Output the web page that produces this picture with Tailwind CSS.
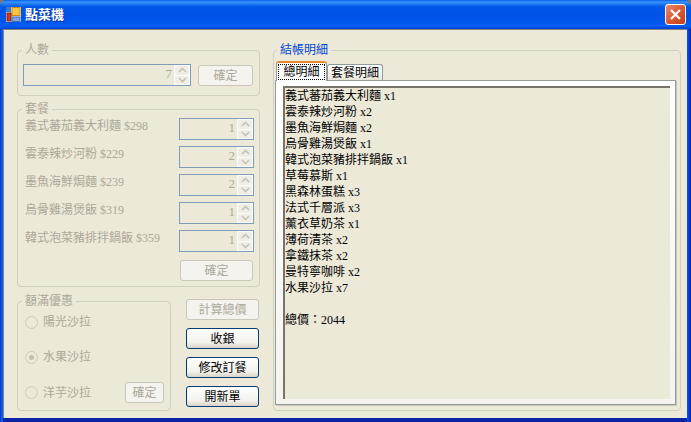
<!DOCTYPE html>
<html lang="zh-Hant">
<head>
<meta charset="utf-8">
<script src="https://cdn.jsdelivr.net/npm/@tailwindcss/browser@4"></script>
<title>點菜機</title>
</head>
<body class="bg-[#7a7a70]">
<div class="w-[691px] h-[422px] overflow-hidden flex flex-col rounded-t-[7px] font-['Liberation_Serif','Noto_Sans_CJK_TC',serif] text-[12px] leading-[16px] text-black bg-[#0a3fd8]">
  <!-- title bar -->
  <div class="h-[29px] shrink-0 flex items-center pl-[6px] pr-[5px] bg-[linear-gradient(180deg,#0a5fe8_0px,#3a93ff_2px,#1f7bf5_4px,#0058ea_7px,#0053e6_14px,#0058ee_24px,#0060f6_26px,#0048e0_28px,#0040d8_29px)]">
    <svg width="15" height="15" viewBox="0 0 15 15" class="shrink-0">
      <rect x="0" y="0" width="15" height="15" fill="#f2f4f8"/>
      <rect x="0" y="0" width="5" height="5" fill="#3d78d0"/>
      <rect x="6" y="0.5" width="8" height="8" fill="#f7c63a" stroke="#c88a10" stroke-width="1"/>
      <rect x="1" y="6" width="4" height="8" fill="#d9361e" stroke="#7a1c10" stroke-width="1"/>
      <rect x="6" y="10" width="8" height="4.5" fill="#7fa5dc" stroke="#3d6cb8" stroke-width="1"/>
    </svg>
    <span class="ml-[4px] text-white text-[13px] font-bold [text-shadow:1px_1px_0_#0f2f9a]">點菜機</span>
    <button class="ml-auto w-[21px] h-[21px] rounded-[3px] border border-white bg-[linear-gradient(135deg,#e98a6c,#dc5a35_50%,#c43c12)] flex items-center justify-center">
      <svg width="13" height="13" viewBox="0 0 13 13"><path d="M2 2 L11 11 M11 2 L2 11" stroke="#fff" stroke-width="2.2" fill="none"/></svg>
    </button>
  </div>

  <!-- frame + client -->
  <div class="flex-1 min-h-0 pl-[3px] pr-[4px] pb-[4px] bg-[linear-gradient(90deg,#0838c8_0px,#0a5cf0_2px,#0a5cf0_3px,#0a5cf0_686px,#0a48e0_688px,#0020b0_691px)]">
    <div class="h-full border-t border-l border-[#85857a] bg-[#ece9d8] flex pl-[13px] pt-[20px] shadow-[0_4px_0_#0a24a8]">

      <!-- left column -->
      <div class="w-[243px] shrink-0 flex flex-col">
        <!-- 人數 -->
        <section class="relative h-[46px] border border-[#d0d0bf] rounded-[4px] flex pl-[5px] pt-[13px]">
          <span class="absolute -top-[9px] left-[4px] px-[3px] bg-[#ece9d8] text-[#aca899]">人數</span>
          <div class="w-[168px] h-[22px] border border-[#7f9db9] flex justify-end text-[#aca899] leading-[18px]">
            <span class="text-[13px] pr-[2px]">7</span>
            <div class="w-[16px] flex flex-col gap-[1px] p-[1px] bg-[#fbfbf8]">
              <div class="flex-1 rounded-[2px] bg-[#efeee6] flex items-center justify-center"><svg width="9" height="6" viewBox="0 0 9 6"><path d="M1 5 L4.5 1.5 L8 5" stroke="#c4c2b6" stroke-width="1.6" fill="none"/></svg></div>
              <div class="flex-1 rounded-[2px] bg-[#efeee6] flex items-center justify-center"><svg width="9" height="6" viewBox="0 0 9 6"><path d="M1 1 L4.5 4.5 L8 1" stroke="#c4c2b6" stroke-width="1.6" fill="none"/></svg></div>
            </div>
          </div>
          <button class="ml-[7px] mt-[1px] w-[55px] h-[21px] rounded-[3px] border border-[#c9c7ba] bg-[#f4f3ee] text-[#aca899]">確定</button>
        </section>

        <!-- 套餐 -->
        <section class="relative mt-[13px] h-[178px] border border-[#d0d0bf] rounded-[4px] pt-[8px] pl-[7px] pr-[5px] flex flex-col gap-[6px] text-[#aca899]">
          <span class="absolute -top-[9px] left-[4px] px-[3px] bg-[#ece9d8]">套餐</span>
          <div class="flex items-center justify-between h-[22px] -translate-y-[3px]"><span>義式蕃茄義大利麵 $298</span></div>
          <div class="flex items-center justify-between h-[22px] -translate-y-[3px]"><span>雲泰辣炒河粉 $229</span></div>
          <div class="flex items-center justify-between h-[22px] -translate-y-[3px]"><span>墨魚海鮮焗麵 $239</span></div>
          <div class="flex items-center justify-between h-[22px] -translate-y-[3px]"><span>烏骨雞湯煲飯 $319</span></div>
          <div class="flex items-center justify-between h-[22px] -translate-y-[3px]"><span>韓式泡菜豬排拌鍋飯 $359</span></div>
          <!-- steppers column lies over the label rows -->
          <div class="absolute top-[8px] right-[5px] flex flex-col gap-[6px] leading-[18px]">
            <div class="w-[75px] h-[22px] border border-[#7f9db9] flex justify-end"><span class="text-[13px] pr-[2px]">1</span><div class="w-[16px] flex flex-col gap-[1px] p-[1px] bg-[#fbfbf8]"><div class="flex-1 rounded-[2px] bg-[#efeee6] flex items-center justify-center"><svg width="9" height="6" viewBox="0 0 9 6"><path d="M1 5 L4.5 1.5 L8 5" stroke="#c4c2b6" stroke-width="1.6" fill="none"/></svg></div><div class="flex-1 rounded-[2px] bg-[#efeee6] flex items-center justify-center"><svg width="9" height="6" viewBox="0 0 9 6"><path d="M1 1 L4.5 4.5 L8 1" stroke="#c4c2b6" stroke-width="1.6" fill="none"/></svg></div></div></div>
            <div class="w-[75px] h-[22px] border border-[#7f9db9] flex justify-end"><span class="text-[13px] pr-[2px]">2</span><div class="w-[16px] flex flex-col gap-[1px] p-[1px] bg-[#fbfbf8]"><div class="flex-1 rounded-[2px] bg-[#efeee6] flex items-center justify-center"><svg width="9" height="6" viewBox="0 0 9 6"><path d="M1 5 L4.5 1.5 L8 5" stroke="#c4c2b6" stroke-width="1.6" fill="none"/></svg></div><div class="flex-1 rounded-[2px] bg-[#efeee6] flex items-center justify-center"><svg width="9" height="6" viewBox="0 0 9 6"><path d="M1 1 L4.5 4.5 L8 1" stroke="#c4c2b6" stroke-width="1.6" fill="none"/></svg></div></div></div>
            <div class="w-[75px] h-[22px] border border-[#7f9db9] flex justify-end"><span class="text-[13px] pr-[2px]">2</span><div class="w-[16px] flex flex-col gap-[1px] p-[1px] bg-[#fbfbf8]"><div class="flex-1 rounded-[2px] bg-[#efeee6] flex items-center justify-center"><svg width="9" height="6" viewBox="0 0 9 6"><path d="M1 5 L4.5 1.5 L8 5" stroke="#c4c2b6" stroke-width="1.6" fill="none"/></svg></div><div class="flex-1 rounded-[2px] bg-[#efeee6] flex items-center justify-center"><svg width="9" height="6" viewBox="0 0 9 6"><path d="M1 1 L4.5 4.5 L8 1" stroke="#c4c2b6" stroke-width="1.6" fill="none"/></svg></div></div></div>
            <div class="w-[75px] h-[22px] border border-[#7f9db9] flex justify-end"><span class="text-[13px] pr-[2px]">1</span><div class="w-[16px] flex flex-col gap-[1px] p-[1px] bg-[#fbfbf8]"><div class="flex-1 rounded-[2px] bg-[#efeee6] flex items-center justify-center"><svg width="9" height="6" viewBox="0 0 9 6"><path d="M1 5 L4.5 1.5 L8 5" stroke="#c4c2b6" stroke-width="1.6" fill="none"/></svg></div><div class="flex-1 rounded-[2px] bg-[#efeee6] flex items-center justify-center"><svg width="9" height="6" viewBox="0 0 9 6"><path d="M1 1 L4.5 4.5 L8 1" stroke="#c4c2b6" stroke-width="1.6" fill="none"/></svg></div></div></div>
            <div class="w-[75px] h-[22px] border border-[#7f9db9] flex justify-end"><span class="text-[13px] pr-[2px]">1</span><div class="w-[16px] flex flex-col gap-[1px] p-[1px] bg-[#fbfbf8]"><div class="flex-1 rounded-[2px] bg-[#efeee6] flex items-center justify-center"><svg width="9" height="6" viewBox="0 0 9 6"><path d="M1 5 L4.5 1.5 L8 5" stroke="#c4c2b6" stroke-width="1.6" fill="none"/></svg></div><div class="flex-1 rounded-[2px] bg-[#efeee6] flex items-center justify-center"><svg width="9" height="6" viewBox="0 0 9 6"><path d="M1 1 L4.5 4.5 L8 1" stroke="#c4c2b6" stroke-width="1.6" fill="none"/></svg></div></div></div>
          </div>
          <button class="ml-[155px] mt-[2px] w-[73px] h-[21px] rounded-[3px] border border-[#c9c7ba] bg-[#f4f3ee] text-[#aca899]">確定</button>
        </section>

        <!-- bottom row -->
        <div class="flex mt-[12px]">
          <section class="relative mt-[2px] w-[154px] h-[110px] border border-[#d0d0bf] rounded-[4px] text-[#aca899] pl-[7px]">
            <span class="absolute -top-[9px] left-[4px] px-[3px] bg-[#ece9d8]">額滿優惠</span>
            <div class="flex items-center h-[20px] mt-[10px]">
              <span class="w-[13px] h-[13px] rounded-full border border-[#cfcdbf] bg-[#ece9d8]"></span>
              <span class="ml-[5px]">陽光沙拉</span>
            </div>
            <div class="flex items-center h-[20px] mt-[15px]">
              <span class="w-[13px] h-[13px] rounded-full border border-[#cfcdbf] flex items-center justify-center"><span class="w-[5px] h-[5px] rounded-full bg-[#c2c0b2]"></span></span>
              <span class="ml-[5px]">水果沙拉</span>
            </div>
            <div class="flex items-center h-[21px] mt-[15px]">
              <span class="w-[13px] h-[13px] rounded-full border border-[#cfcdbf]"></span>
              <span class="ml-[5px]">洋芋沙拉</span>
              <button class="ml-[34px] w-[39px] h-[21px] rounded-[3px] border border-[#c9c7ba] bg-[#f4f3ee]">確定</button>
            </div>
          </section>
          <div class="ml-[15px] w-[73px] flex flex-col gap-[8px]">
            <button class="h-[21px] rounded-[3px] border border-[#c9c7ba] bg-[#f4f3ee] text-[#aca899]">計算總價</button>
            <button class="h-[21px] rounded-[3px] border border-[#003c74] bg-[linear-gradient(180deg,#ffffff,#f3f2ec_70%,#d8d4c8)]">收銀</button>
            <button class="h-[21px] rounded-[3px] border border-[#003c74] bg-[linear-gradient(180deg,#ffffff,#f3f2ec_70%,#d8d4c8)]">修改訂餐</button>
            <button class="h-[21px] rounded-[3px] border border-[#003c74] bg-[linear-gradient(180deg,#ffffff,#f3f2ec_70%,#d8d4c8)]">開新單</button>
          </div>
        </div>
      </div>

      <!-- right group -->
      <section class="relative ml-[13px] w-[408px] h-[361px] border border-[#d0d0bf] rounded-[4px] pl-[1px] pt-[10px]">
        <span class="absolute -top-[9px] left-[3px] px-[3px] bg-[#ece9d8] text-[#0046d5]">結帳明細</span>
        <!-- tabs -->
        <div class="flex items-end h-[19px] pl-[1px] relative z-10">
          <div class="w-[51px] h-[20px] -mb-[1px] rounded-t-[3px] border-x border-[#919b9c] border-t-2 border-t-[#e68b2c] bg-white p-[1px]">
            <div class="h-full border border-dotted border-black flex items-center justify-center">總明細</div>
          </div>
          <div class="w-[56px] h-[16px] rounded-t-[3px] border-x border-t border-[#919b9c] bg-[linear-gradient(180deg,#ffffff,#f3f2ec_70%,#e6e3d6)] flex items-center justify-center">套餐明細</div>
        </div>
        <!-- tab panel -->
        <div class="w-[401px] h-[325px] border border-[#919b9c] shadow-[1px_1px_0_#c8c6b8] bg-[linear-gradient(180deg,#ffffff,#f4f3ee)] pt-[5px] pl-[7px] pr-[5px] pb-[5px]">
          <div class="h-full border-t-2 border-l-2 border-[#77756a] bg-[#ece9d8]">
            <p>義式蕃茄義大利麵 x1</p>
            <p>雲泰辣炒河粉 x2</p>
            <p>墨魚海鮮焗麵 x2</p>
            <p>烏骨雞湯煲飯 x1</p>
            <p>韓式泡菜豬排拌鍋飯 x1</p>
            <p>草莓慕斯 x1</p>
            <p>黑森林蛋糕 x3</p>
            <p>法式千層派 x3</p>
            <p>薰衣草奶茶 x1</p>
            <p>薄荷清茶 x2</p>
            <p>拿鐵抹茶 x2</p>
            <p>曼特寧咖啡 x2</p>
            <p>水果沙拉 x7</p>
            <p class="h-[16px]"></p>
            <p>總價：2044</p>
          </div>
        </div>
      </section>
    </div>
  </div>
</div>
</body>
</html>
